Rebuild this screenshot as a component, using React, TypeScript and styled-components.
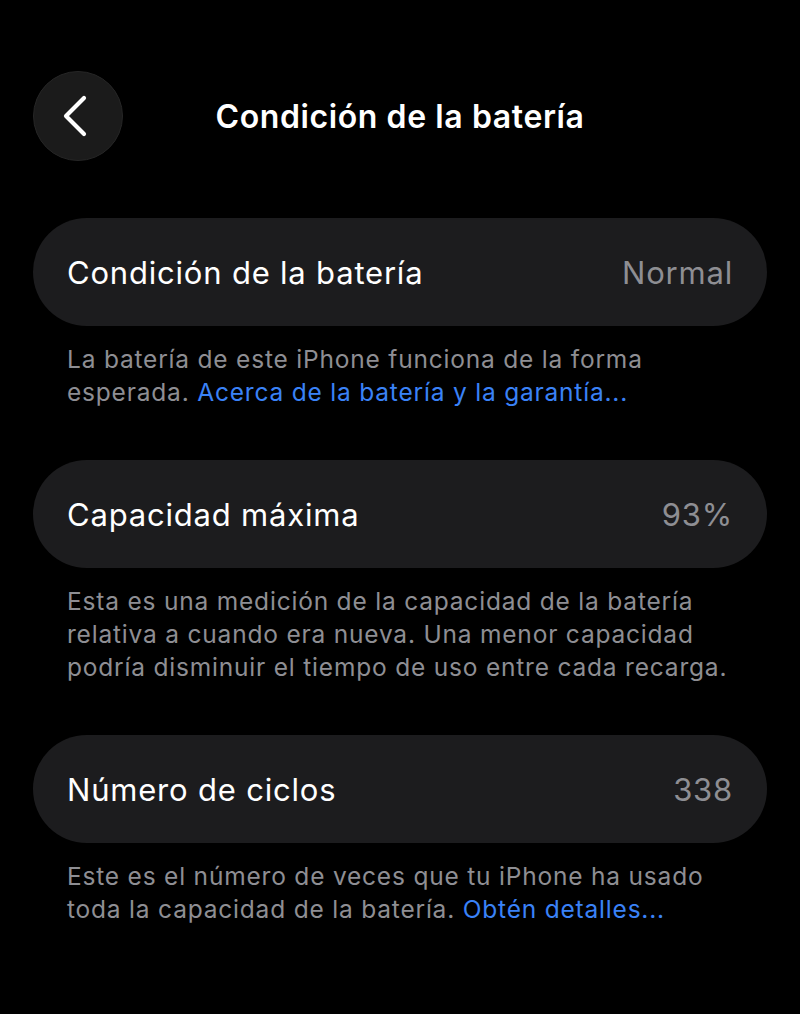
import React, { FC } from 'react'
import styled, { createGlobalStyle } from 'styled-components'

const GlobalStyle = createGlobalStyle`
  html, body {
    margin: 0;
    padding: 0;
    background: #000;
  }
  body {
    font-family: Inter, 'Noto Sans', sans-serif;
    -webkit-font-smoothing: antialiased;
  }
`

type Section = {
  label: string
  value: string
  note: string
  link?: string
}

const sections: Section[] = [
  {
    label: 'Condición de la batería',
    value: 'Normal',
    note: 'La batería de este iPhone funciona de la forma esperada.',
    link: 'Acerca de la batería y la garantía...',
  },
  {
    label: 'Capacidad máxima',
    value: '93%',
    note: 'Esta es una medición de la capacidad de la batería relativa a cuando era nueva. Una menor capacidad podría disminuir el tiempo de uso entre cada recarga.',
  },
  {
    label: 'Número de ciclos',
    value: '338',
    note: 'Este es el número de veces que tu iPhone ha usado toda la capacidad de la batería.',
    link: 'Obtén detalles...',
  },
]

const BackIcon: FC = () => (
  <svg width="28" height="44" viewBox="0 0 28 44" fill="none">
    <path d="M23 4 L5 22 L23 40" stroke="#fff" strokeWidth="4.2" strokeLinecap="round" strokeLinejoin="round" />
  </svg>
)

export default function App() {
  return (
    <Page>
      <GlobalStyle />
      <Header>
        <BackButton aria-label="Atrás">
          <BackIcon />
        </BackButton>
        <Title>Condición de la batería</Title>
        <span />
      </Header>
      <List>
        {sections.map((s) => (
          <Group key={s.label}>
            <Row>
              <Label>{s.label}</Label>
              <Value>{s.value}</Value>
            </Row>
            <Note>
              {s.note}
              {s.link && (
                <>
                  {' '}
                  <NoteLink>{s.link}</NoteLink>
                </>
              )}
            </Note>
          </Group>
        ))}
      </List>
    </Page>
  )
}

const Page = styled.div`
  width: 800px;
  min-height: 1014px;
  box-sizing: border-box;
  padding: 71px 33px 0;
  background: #000;
  color: #fff;
`

const Header = styled.header`
  display: grid;
  grid-template-columns: 90px 1fr 90px;
  align-items: center;
  height: 90px;
`

const BackButton = styled.button`
  width: 90px;
  height: 90px;
  border-radius: 50%;
  border: 1px solid #262626;
  padding: 0 6px 0 0;
  background: #1b1b1b;
  display: flex;
  align-items: center;
  justify-content: center;
`

const Title = styled.h1`
  margin: 0;
  text-align: center;
  font-size: 32px;
  font-weight: 600;
  letter-spacing: 0.6px;
`

const List = styled.div`
  display: flex;
  flex-direction: column;
  gap: 51px;
  margin-top: 57px;
`

const Group = styled.section`
  display: flex;
  flex-direction: column;
  gap: 17px;
`

const Row = styled.div`
  display: flex;
  justify-content: space-between;
  align-items: center;
  height: 108px;
  padding: 0 34px;
  border-radius: 54px;
  background: #1c1c1e;
  font-size: 31px;
  letter-spacing: 0.8px;
`

const Label = styled.span`
  color: #fff;
`

const Value = styled.span`
  color: #8e8e93;
`

const Note = styled.p`
  margin: 0;
  padding: 0 34px;
  font-size: 24.5px;
  line-height: 33px;
  color: #8e8e93;
  letter-spacing: 0.8px;
`

const NoteLink = styled.a`
  color: #3a82f7;
`
